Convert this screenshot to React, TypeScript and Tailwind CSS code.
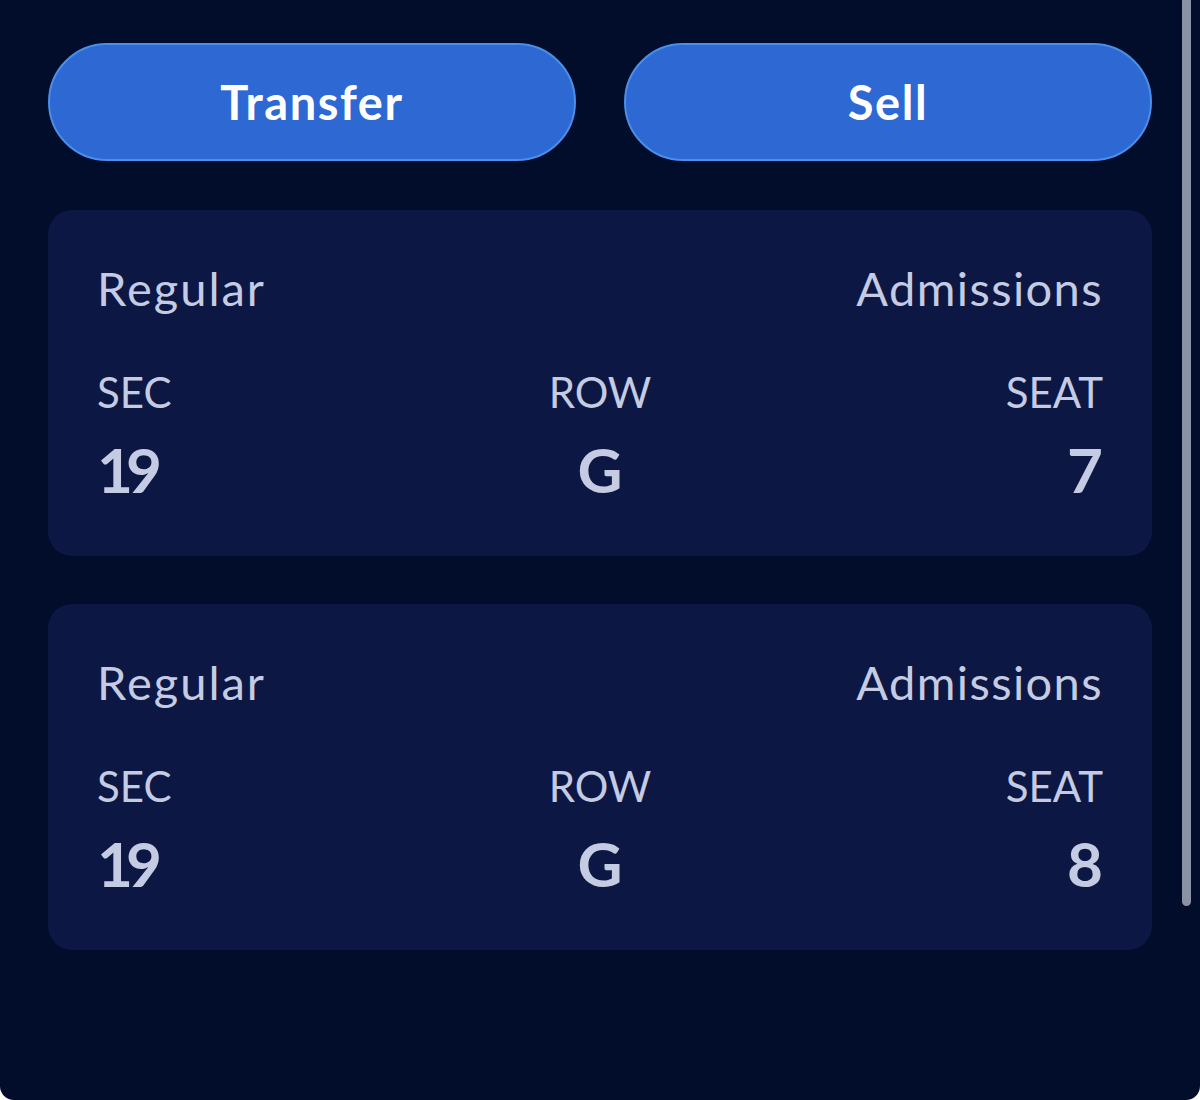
import React from 'react';

interface Ticket {
  section: string;
  row: string;
  seat: string;
}

const tickets: Ticket[] = [
  { section: '19', row: 'G', seat: '7' },
  { section: '19', row: 'G', seat: '8' },
];

const font = { fontFamily: 'Lato, "Noto Sans", sans-serif' };

const ActionButton: React.FC<{ label: string }> = ({ label }) => (
  <button
    type="button"
    className="h-[118px] flex-1 rounded-full border-2 border-[#4a8fe8] bg-[#2d68d3] text-[47px] font-bold leading-none tracking-[1.6px] text-white"
  >
    {label}
  </button>
);

const TicketCard: React.FC<{ ticket: Ticket }> = ({ ticket }) => (
  <div className="rounded-[24px] bg-[#0c1843] px-[49px] pt-[50px] pb-[55px] text-[#c4cbe2]">
    <div className="flex justify-between text-[47px] leading-[56px]">
      <span className="tracking-[2px]">Regular</span>
      <span className="tracking-[1.4px]">Admissions</span>
    </div>
    <div className="mt-[51px] grid grid-cols-3">
      <div className="flex flex-col items-start">
        <span className="text-[42px] leading-[50px]">SEC</span>
        <span className="mt-[20px] text-[62px] font-bold leading-[64px] tracking-[-7px]">{ticket.section}</span>
      </div>
      <div className="flex flex-col items-center">
        <span className="text-[42px] leading-[50px]">ROW</span>
        <span className="mt-[20px] text-[62px] font-bold leading-[64px]">{ticket.row}</span>
      </div>
      <div className="flex flex-col items-end">
        <span className="text-[42px] leading-[50px]">SEAT</span>
        <span className="mt-[20px] text-[62px] font-bold leading-[64px]">{ticket.seat}</span>
      </div>
    </div>
  </div>
);

export default function App() {
  return (
    <div className="min-h-[1100px] bg-white" style={font}>
      <div className="relative h-[1100px] overflow-hidden rounded-b-[14px] bg-[#020c2b] pl-[48px] pr-[48px] pt-[43px]">
        <div className="flex gap-[48px]">
          <ActionButton label="Transfer" />
          <ActionButton label="Sell" />
        </div>
        <div className="mt-[49px] flex flex-col gap-[48px]">
          {tickets.map((t, i) => (
            <TicketCard key={i} ticket={t} />
          ))}
        </div>
        {/* scrollbar thumb */}
        <div className="absolute right-[9px] top-0 h-[906px] w-[9px] rounded-b-full bg-[#8b91a4]" />
      </div>
    </div>
  );
}
